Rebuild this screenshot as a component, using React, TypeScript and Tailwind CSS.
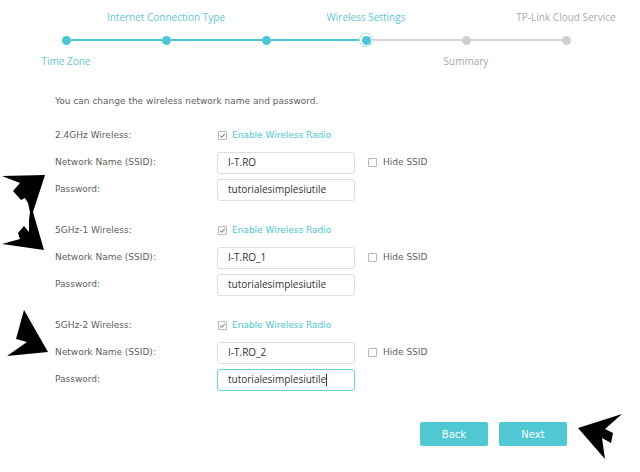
import React from 'react';

const TEAL = '#4cc6d3';

type Step = { label: string; pos: 'top' | 'bottom'; state: 'done' | 'current' | 'todo' };

const steps: Step[] = [
  { label: 'Time Zone', pos: 'bottom', state: 'done' },
  { label: 'Internet Connection Type', pos: 'top', state: 'done' },
  { label: '', pos: 'bottom', state: 'done' },
  { label: 'Wireless Settings', pos: 'top', state: 'current' },
  { label: 'Summary', pos: 'bottom', state: 'todo' },
  { label: 'TP-Link Cloud Service', pos: 'top', state: 'todo' },
];

function Stepper() {
  return (
    <div className="flex pl-[16px] pt-[10px]">
      {steps.map((s, i) => {
        const textColor = s.state === 'todo' ? 'text-[#a9a9a9]' : 'text-[#5fc6d1]';
        const leftColor = i === 0 ? 'bg-transparent' : s.state === 'todo' ? 'bg-[#d6d6d6]' : 'bg-[#4cc6d3]';
        const rightColor =
          i === steps.length - 1
            ? 'bg-transparent'
            : s.state === 'done'
              ? 'bg-[#4cc6d3]'
              : 'bg-[#d6d6d6]';
        return (
          <div key={i} className="w-[100px] flex flex-col items-center">
            <div className={`h-[14px] leading-[14px] text-[10px] whitespace-nowrap ${textColor}`}>
              {s.pos === 'top' ? s.label : ''}
            </div>
            <div className="mt-[9px] h-[14px] w-full flex items-center">
              <div className={`flex-1 h-[2px] ${leftColor}`} />
              {s.state === 'current' ? (
                <div className="w-[14px] h-[14px] rounded-full border border-dotted border-[#4cc6d3] flex items-center justify-center">
                  <div className="w-[9px] h-[9px] rounded-full bg-[#4cc6d3]" />
                </div>
              ) : (
                <div
                  className={`w-[9px] h-[9px] rounded-full ${s.state === 'done' ? 'bg-[#4cc6d3]' : 'bg-[#cfcfcf]'}`}
                />
              )}
              <div className={`flex-1 h-[2px] ${rightColor}`} />
            </div>
            <div className={`mt-[7px] h-[14px] leading-[14px] text-[10px] whitespace-nowrap ${textColor}`}>
              {s.pos === 'bottom' ? s.label : ''}
            </div>
          </div>
        );
      })}
    </div>
  );
}

function CheckBox({ checked }: { checked?: boolean }) {
  return (
    <span className="w-[9px] h-[9px] border border-[#b8b8b8] bg-white flex items-center justify-center rounded-[1px]">
      {checked && (
        <svg width="7" height="7" viewBox="0 0 8 8">
          <path d="M1.3 4.2 L3.2 6 L6.8 1.8" fill="none" stroke="#7a8a8c" strokeWidth="1.2" />
        </svg>
      )}
    </span>
  );
}

function Input({ value, focused }: { value: string; focused?: boolean }) {
  return (
    <div
      className={`w-[138px] h-[22px] rounded-[3px] border bg-white pl-[10px] flex items-center text-[10px] text-[#333] ${
        focused ? 'border-[#6fcfd9]' : 'border-[#dedede]'
      }`}
      style={{ fontFamily: '"Open Sans", sans-serif' }}
    >
      {value}
      {focused && <span className="w-px h-[12px] bg-[#333]" />}
    </div>
  );
}

function Row({ label, children }: { label: string; children: React.ReactNode }) {
  return (
    <div className="h-[27px] flex items-center">
      <div className="w-[162px] text-[9px] text-[#606060]">{label}</div>
      {children}
    </div>
  );
}

function Band({ name, ssid, focused }: { name: string; ssid: string; focused?: boolean }) {
  return (
    <div className="flex flex-col">
      <Row label={name}>
        <div className="flex items-center gap-[5px] pl-[1px]">
          <CheckBox checked />
          <span className="text-[9px]" style={{ color: TEAL }}>
            Enable Wireless Radio
          </span>
        </div>
      </Row>
      <Row label="Network Name (SSID):">
        <Input value={ssid} />
        <div className="ml-[13px] flex items-center gap-[6px]">
          <CheckBox />
          <span className="text-[9px] text-[#606060]">Hide SSID</span>
        </div>
      </Row>
      <Row label="Password:">
        <Input value="tutorialesimplesiutile" focused={focused} />
      </Row>
    </div>
  );
}

function Arrows() {
  return (
    <svg className="absolute inset-0 pointer-events-none" width="640" height="472" viewBox="0 0 640 472">
      <polygon
        fill="#000"
        points="2,176 45,175 33,212 44,250 2,244 20,239 18,233 24,226 29,232 29,220 30,212 28,203 25,198 21,200 13,191 20,183"
      />
      <polygon fill="#000" points="24,310 48,352 7,356 27,342 16,339" />
      <polygon fill="#000" points="578,428 622,414 605,429 613,433 611,443 602,438 605,459" />
    </svg>
  );
}

export default function App() {
  return (
    <div
      className="relative w-[640px] h-[472px] bg-white overflow-hidden"
      style={{ fontFamily: '"DejaVu Sans", Verdana, sans-serif' }}
    >
      <div style={{ fontFamily: '"Open Sans", sans-serif' }}>
        <Stepper />
      </div>
      <div className="pl-[55px]">
        <div className="mt-[26px] h-[14px] leading-[14px] text-[9px] text-[#606060]">
          You can change the wireless network name and password.
        </div>
        <div className="mt-[14px]">
          <Band name="2.4GHz Wireless:" ssid="I-T.RO" />
        </div>
        <div className="mt-[14px]">
          <Band name="5GHz-1 Wireless:" ssid="I-T.RO_1" />
        </div>
        <div className="mt-[14px]">
          <Band name="5GHz-2 Wireless:" ssid="I-T.RO_2" focused />
        </div>
      </div>
      <div className="mt-[29px] flex justify-end pr-[73px] gap-[11px]">
        <button className="w-[68px] h-[24px] rounded-[2px] bg-[#4fc8d4] text-white text-[10px]">Back</button>
        <button className="w-[68px] h-[24px] rounded-[2px] bg-[#4fc8d4] text-white text-[10px]">Next</button>
      </div>
      <Arrows />
    </div>
  );
}
